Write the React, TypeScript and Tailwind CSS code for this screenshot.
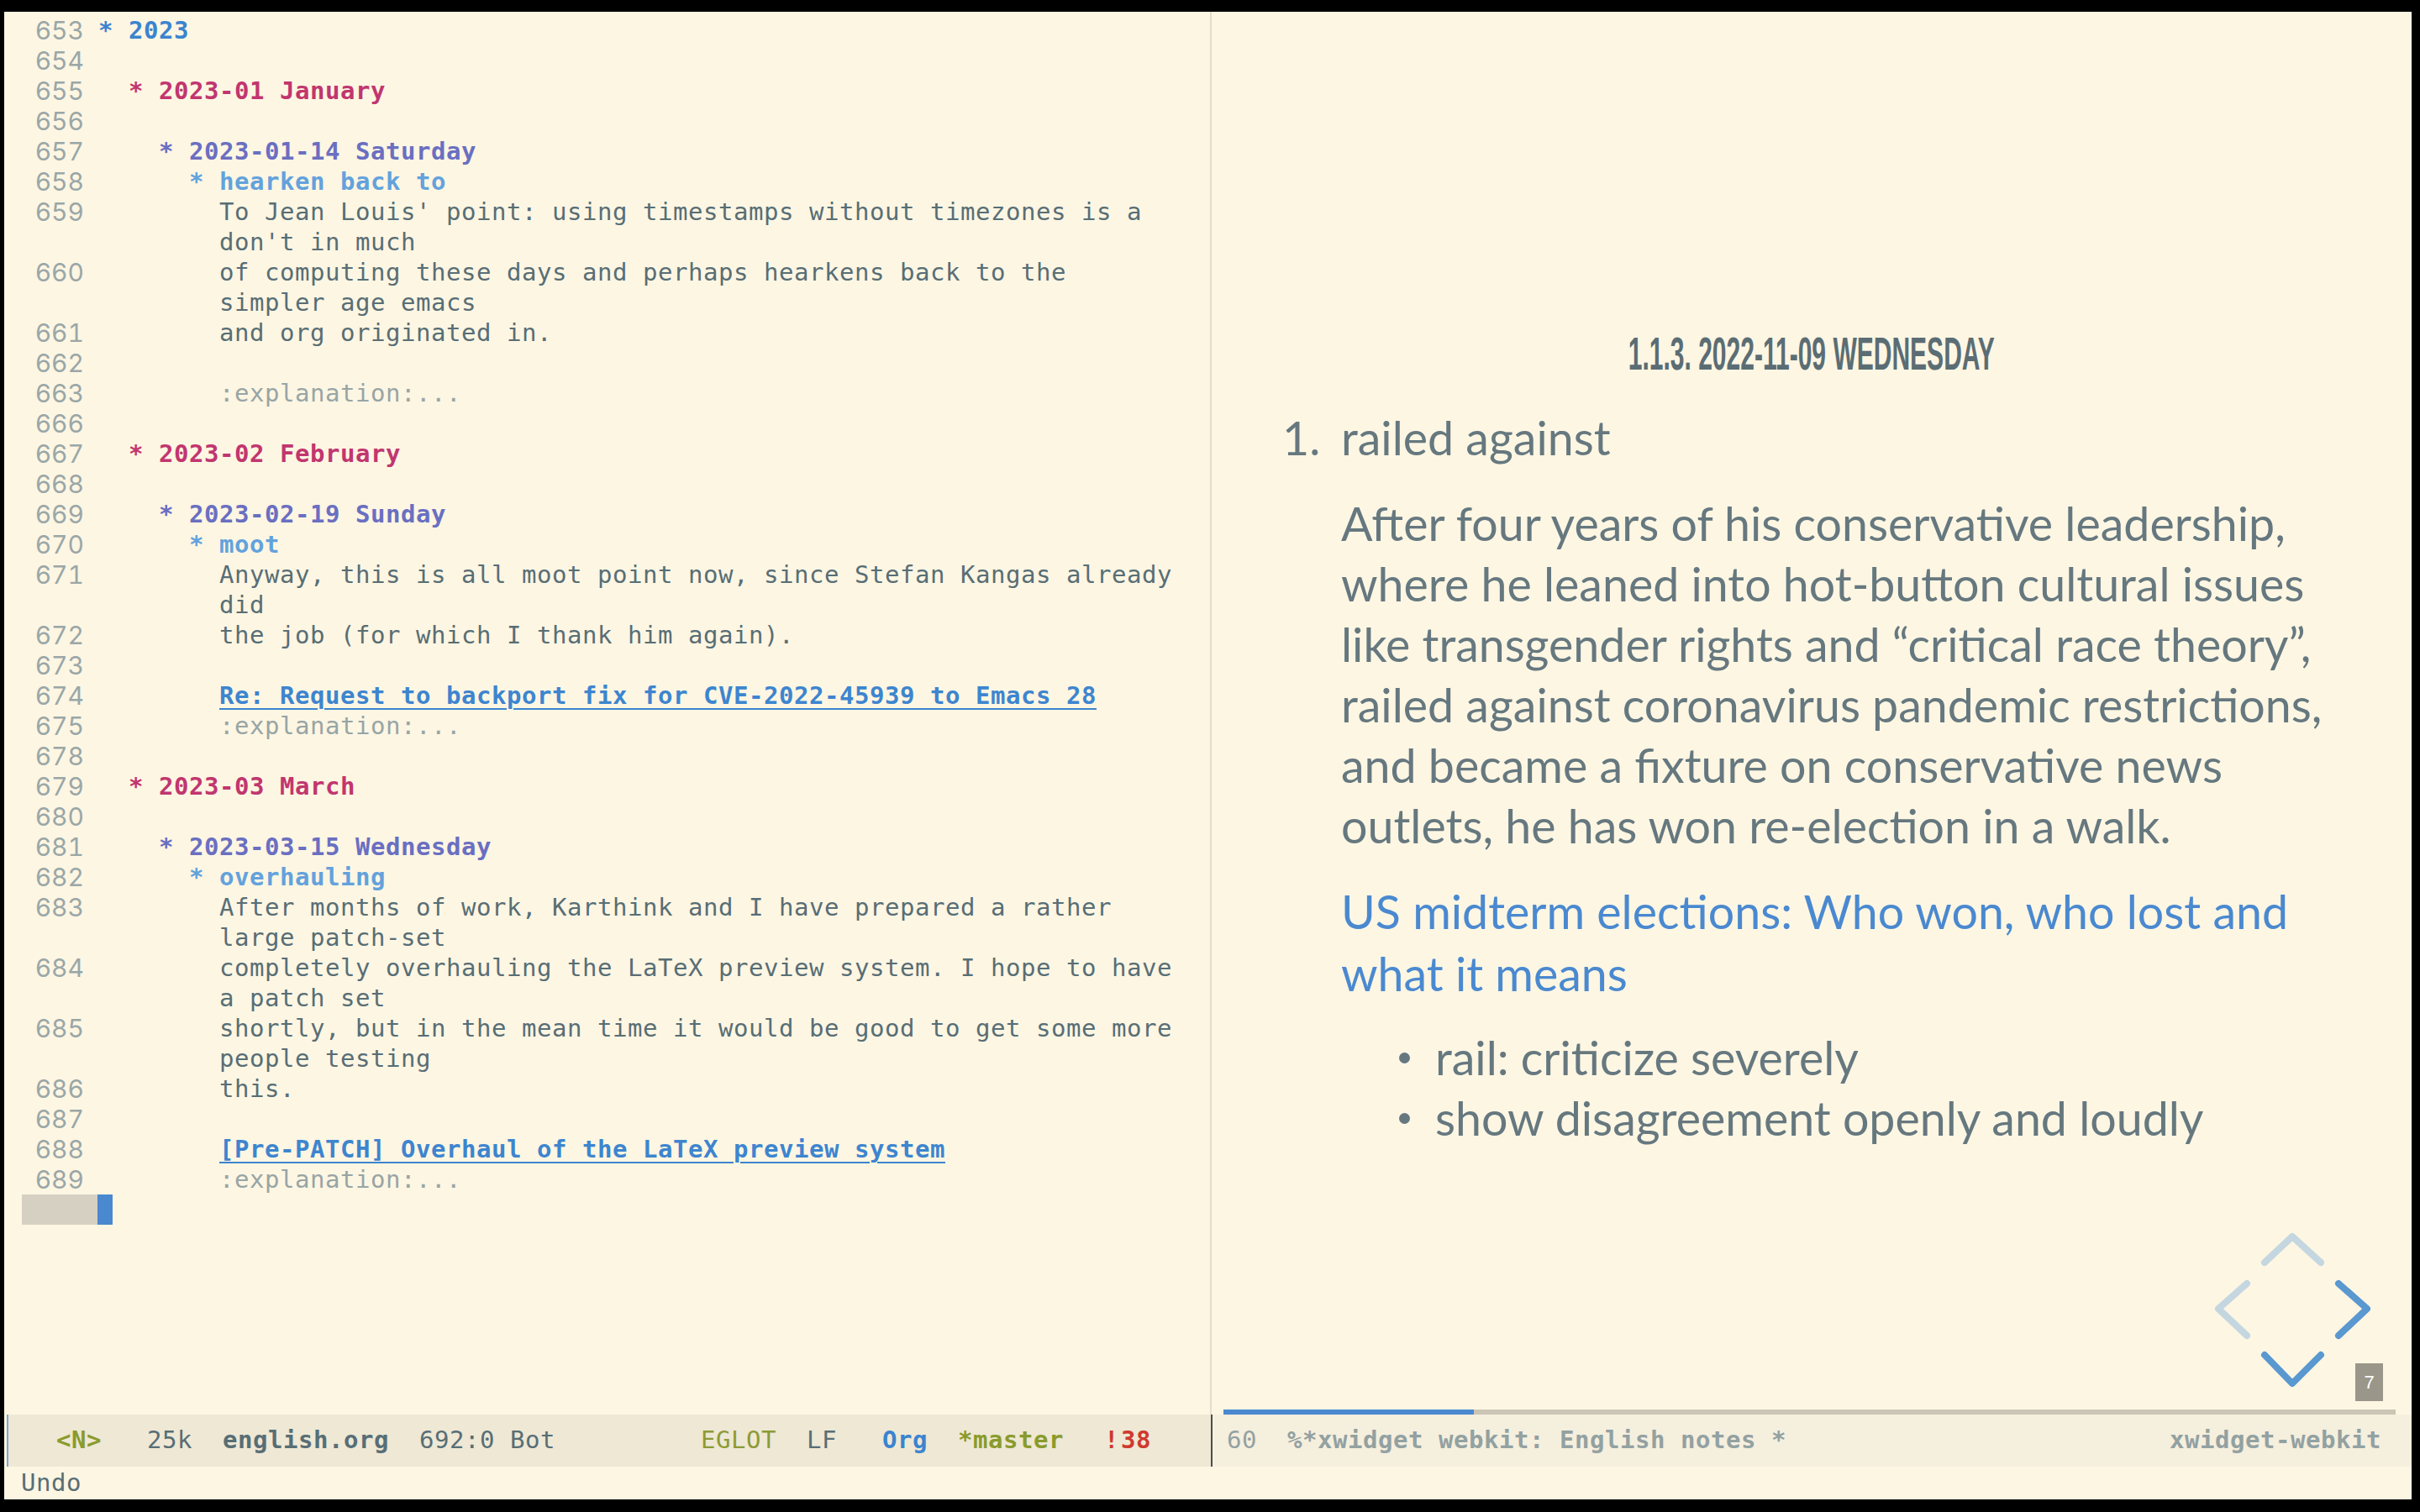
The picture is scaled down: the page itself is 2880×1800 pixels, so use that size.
import React from "react";

type Kind = "h1" | "h2" | "h3" | "h4" | "link" | "dim" | "txt";
type Seg = { t: string; k?: Kind };
type Row = { n?: string; pad: string; segs: Seg[] };

const kindClass: Record<Kind, string> = {
  h1: "font-bold text-[#3b84cf]",
  h2: "font-bold text-[#c1366f]",
  h3: "font-bold text-[#6a6fc1]",
  h4: "font-bold text-[#63a2dc]",
  link: "font-bold text-[#3d85cf] underline decoration-2 underline-offset-[5px]",
  dim: "text-[#98a5a5]",
  txt: "text-[#586e75]",
};

const B = "        ";

const rows: Row[] = [
  { n: "653", pad: "", segs: [{ t: "* 2023", k: "h1" }] },
  { n: "654", pad: "", segs: [] },
  { n: "655", pad: "  ", segs: [{ t: "* 2023-01 January", k: "h2" }] },
  { n: "656", pad: "", segs: [] },
  { n: "657", pad: "    ", segs: [{ t: "* 2023-01-14 Saturday", k: "h3" }] },
  { n: "658", pad: "      ", segs: [{ t: "* hearken back to", k: "h4" }] },
  { n: "659", pad: B, segs: [{ t: "To Jean Louis' point: using timestamps without timezones is a" }] },
  { pad: B, segs: [{ t: "don't in much" }] },
  { n: "660", pad: B, segs: [{ t: "of computing these days and perhaps hearkens back to the" }] },
  { pad: B, segs: [{ t: "simpler age emacs" }] },
  { n: "661", pad: B, segs: [{ t: "and org originated in." }] },
  { n: "662", pad: "", segs: [] },
  { n: "663", pad: B, segs: [{ t: ":explanation:...", k: "dim" }] },
  { n: "666", pad: "", segs: [] },
  { n: "667", pad: "  ", segs: [{ t: "* 2023-02 February", k: "h2" }] },
  { n: "668", pad: "", segs: [] },
  { n: "669", pad: "    ", segs: [{ t: "* 2023-02-19 Sunday", k: "h3" }] },
  { n: "670", pad: "      ", segs: [{ t: "* moot", k: "h4" }] },
  { n: "671", pad: B, segs: [{ t: "Anyway, this is all moot point now, since Stefan Kangas already" }] },
  { pad: B, segs: [{ t: "did" }] },
  { n: "672", pad: B, segs: [{ t: "the job (for which I thank him again)." }] },
  { n: "673", pad: "", segs: [] },
  { n: "674", pad: B, segs: [{ t: "Re: Request to backport fix for CVE-2022-45939 to Emacs 28", k: "link" }] },
  { n: "675", pad: B, segs: [{ t: ":explanation:...", k: "dim" }] },
  { n: "678", pad: "", segs: [] },
  { n: "679", pad: "  ", segs: [{ t: "* 2023-03 March", k: "h2" }] },
  { n: "680", pad: "", segs: [] },
  { n: "681", pad: "    ", segs: [{ t: "* 2023-03-15 Wednesday", k: "h3" }] },
  { n: "682", pad: "      ", segs: [{ t: "* overhauling", k: "h4" }] },
  { n: "683", pad: B, segs: [{ t: "After months of work, Karthink and I have prepared a rather" }] },
  { pad: B, segs: [{ t: "large patch-set" }] },
  { n: "684", pad: B, segs: [{ t: "completely overhauling the LaTeX preview system. I hope to have" }] },
  { pad: B, segs: [{ t: "a patch set" }] },
  { n: "685", pad: B, segs: [{ t: "shortly, but in the mean time it would be good to get some more" }] },
  { pad: B, segs: [{ t: "people testing" }] },
  { n: "686", pad: B, segs: [{ t: "this." }] },
  { n: "687", pad: "", segs: [] },
  { n: "688", pad: B, segs: [{ t: "[Pre-PATCH] Overhaul of the LaTeX preview system", k: "link" }] },
  { n: "689", pad: B, segs: [{ t: ":explanation:...", k: "dim" }] },
];

const mono = "font-['DejaVu_Sans_Mono',monospace] text-[29px] tracking-[0.54px]";

function OrgBuffer() {
  return (
    <div className="flex-1 overflow-hidden border-r-2 border-[#e3ddcc] pt-[4px]">
      {rows.map((r, i) => (
        <div key={i} className="flex h-[36px] items-center leading-[36px]">
          <div className="w-[95px] text-right font-['Inter',sans-serif] text-[30px] tabular-nums text-[#9aa7a7]">
            {r.n ?? ""}
          </div>
          <div className={`pl-[17px] whitespace-pre ${mono}`}>
            {r.pad}
            {r.segs.map((s, j) => (
              <span key={j} className={kindClass[s.k ?? "txt"]}>
                {s.t}
              </span>
            ))}
          </div>
        </div>
      ))}
      {/* current line / cursor */}
      <div className="flex h-[36px]">
        <div className="w-[21px]" />
        <div className="w-[90px] bg-[#d5d0c2]" />
        <div className="w-[18px] bg-[#4a88cf]" />
      </div>
    </div>
  );
}

function LeftModeline() {
  return (
    <div
      className={`ml-[3px] flex h-[62px] items-center whitespace-pre border-l-2 border-r border-l-[#7ba6d6] border-r-[#4c4c4c] bg-[#eee8d5] pl-[57px] text-[#586e75] ${mono}`}
    >
      <span className="font-bold text-[#8a9b2c]">{"<N>"}</span>
      <span>{"   25k  "}</span>
      <span className="font-bold">english.org</span>
      <span>{"  692:0 Bot"}</span>
      <span className="ml-[173px] text-[#8d9b35]">EGLOT</span>
      <span>{"  LF   "}</span>
      <span className="font-bold text-[#3b84cf]">Org</span>
      <span>{"  "}</span>
      <span className="font-bold text-[#8a9b2c]">*master</span>
      <span className="ml-[48px] font-bold text-[#d0392f]">!</span>
      <span className="ml-[2px] font-bold text-[#d0392f]">38</span>
    </div>
  );
}

function NavControls() {
  return (
    <svg
      className="absolute left-[1188px] top-[1448px]"
      width="200"
      height="200"
      viewBox="0 0 200 200"
      fill="none"
      strokeWidth="8"
      strokeLinecap="round"
      strokeLinejoin="round"
    >
      <polyline points="65,41 98,10 132,41" stroke="#c4d6e0" />
      <polyline points="44,66 10,96 44,128" stroke="#c4d6e0" />
      <polyline points="153,66 187,96 153,128" stroke="#5a98d0" />
      <polyline points="65,151 98,185 132,151" stroke="#5a98d0" />
    </svg>
  );
}

function Slide() {
  return (
    <div className="relative flex-1 overflow-hidden">
      <div className="pt-[375px] font-['Lato',sans-serif] text-[55.5px] text-[#66787f]">
        <div className="text-center leading-[60px]">
          <span className="inline-block scale-x-[0.536] font-['Liberation_Sans',sans-serif] text-[56px] font-bold text-[#5b6d74]">
            1.1.3. 2022-11-09 WEDNESDAY
          </span>
        </div>

        <div className="mt-[34px] flex pl-[84px] leading-[72px]">
          <div className="w-[70px]">1.</div>
          <div>railed against</div>
        </div>

        <div className="mt-[30px] pl-[154px] leading-[72px] whitespace-nowrap">
          After four years of his conservative leadership,
          <br />
          where he leaned into hot-button cultural issues
          <br />
          like transgender rights and “critical race theory”,
          <br />
          railed against coronavirus pandemic restrictions,
          <br />
          and became a fixture on conservative news
          <br />
          outlets, he has won re-election in a walk.
        </div>

        <div className="mt-[29px] pl-[154px] leading-[74px] whitespace-nowrap text-[#4a89d0]">
          US midterm elections: Who won, who lost and
          <br />
          what it means
        </div>

        <ul className="mt-[27px] leading-[72px]">
          {["rail: criticize severely", "show disagreement openly and loudly"].map((t) => (
            <li key={t} className="flex items-center pl-[223px]">
              <span className="h-[13px] w-[13px] rounded-full bg-[#66787f]" />
              <span className="ml-[30px]">{t}</span>
            </li>
          ))}
        </ul>
      </div>

      <NavControls />

      <div className="absolute left-[1361px] top-[1609px] flex h-[45px] w-[33px] items-center justify-center bg-[#9a968a] font-['Liberation_Sans',sans-serif] text-[22px] text-white">
        7
      </div>
    </div>
  );
}

function RightModeline() {
  return (
    <div
      className={`flex h-[62px] items-center justify-between whitespace-pre border-l border-[#4c4c4c] bg-[#f5efde] pl-[17px] pr-[36px] text-[#93a1a1] ${mono}`}
    >
      <div>
        <span>{"60  "}</span>
        <span className="font-bold">%*xwidget webkit: English notes *</span>
      </div>
      <span className="font-bold">xwidget-webkit</span>
    </div>
  );
}

export default function App() {
  return (
    <div className="flex h-[1800px] w-[2880px] flex-col bg-black pt-[14px] pb-[15px] pl-[5px] pr-[10px]">
      <div className="flex flex-1 flex-col bg-[#fdf6e3]">
        <div className="flex flex-1">
          {/* left window: org buffer */}
          <div className="flex w-[1437px] flex-col">
            <OrgBuffer />
            <LeftModeline />
          </div>

          {/* right window: xwidget webkit */}
          <div className="flex flex-1 flex-col">
            <Slide />
            <div className="ml-[14px] mr-[19px] flex h-[6px] bg-[#cbc5b5]">
              <div className="w-[298px] bg-[#4a89d0]" />
            </div>
            <RightModeline />
          </div>
        </div>

        {/* echo area */}
        <div className={`flex h-[39px] items-center pl-[20px] text-[#586e75] ${mono}`}>Undo</div>
      </div>
    </div>
  );
}
